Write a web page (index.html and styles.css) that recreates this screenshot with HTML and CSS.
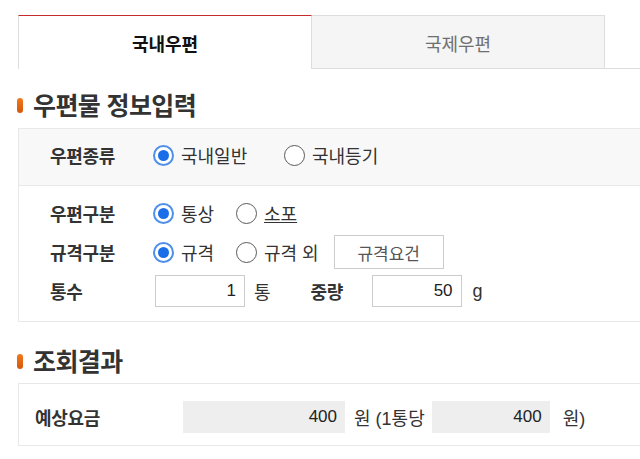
FILE: index.html
```html
<!DOCTYPE html>
<html lang="ko">
<head>
<meta charset="utf-8">
<title>우편요금 조회</title>
<link rel="stylesheet" href="styles.css">
</head>
<body>
<div class="page">
  <div class="tabs">
    <div class="tab active">국내우편</div>
    <div class="tab">국제우편</div>
    <div class="tab-rest"></div>
  </div>

  <h2 class="heading"><span class="bullet"></span>우편물 정보입력</h2>
  <div class="box">
    <div class="row row-first">
      <div class="label">우편종류</div>
      <label class="opt opt-wide"><span class="radio on"></span>국내일반</label>
      <label class="opt"><span class="radio"></span>국내등기</label>
    </div>
    <div class="section">
      <div class="row">
        <div class="label">우편구분</div>
        <label class="opt opt-narrow"><span class="radio on"></span>통상</label>
        <label class="opt"><span class="radio"></span><u>소포</u></label>
      </div>
      <div class="row">
        <div class="label">규격구분</div>
        <label class="opt opt-narrow"><span class="radio on"></span>규격</label>
        <label class="opt"><span class="radio"></span>규격 외</label>
        <button class="btn">규격요건</button>
      </div>
      <div class="row">
        <div class="label">통수</div>
        <div class="field f-count">1</div>
        <span class="unit">통</span>
        <div class="label label-inline">중량</div>
        <div class="field f-weight">50</div>
        <span class="unit unit-g">g</span>
      </div>
    </div>
  </div>

  <h2 class="heading heading-2"><span class="bullet"></span>조회결과</h2>
  <div class="box box-result">
    <div class="row">
      <div class="label label-result">예상요금</div>
      <div class="field readonly f-total">400</div>
      <span class="unit">원 (1통당</span>
      <div class="field readonly f-each">400</div>
      <span class="unit unit-end">원)</span>
    </div>
  </div>
</div>
</body>
</html>
```

FILE: styles.css
```css
html, body {
  margin: 0;
  padding: 0;
  background: #fff;
  overflow: hidden;
}
body {
  font-family: "Liberation Sans", "Noto Sans CJK KR", sans-serif;
  color: #333;
  font-size: 18px;
}
.page {
  width: 700px;
  padding: 15px 0 0 18px;
}
.tabs {
  display: flex;
  height: 54px;
}
.tab {
  width: 293px;
  box-sizing: border-box;
  display: flex;
  align-items: center;
  justify-content: center;
  font-size: 18px;
  color: #6f6f6f;
  background: #f5f5f5;
  border: 1px solid #ddd;
  border-left: none;
  padding-top: 1px;
}
.tab.active {
  width: 294px;
  background: #fff;
  color: #111;
  font-weight: bold;
  border-top: 1px solid #c62c2c;
  border-left: 1px solid #ddd;
  border-bottom: none;
  border-right: 1px solid #ddd;
}
.tab-rest {
  flex: 1;
  border-bottom: 1px solid #ddd;
}
.heading {
  margin: 0 0 0 -1px;
  height: 59px;
  box-sizing: border-box;
  padding-top: 11px;
  display: flex;
  align-items: center;
  font-size: 25px;
  font-weight: bold;
  color: #333;
  letter-spacing: -0.6px;
}
.bullet {
  width: 6px;
  height: 15px;
  border-radius: 3px;
  background: linear-gradient(#f07a1e, #d8560a);
  margin-right: 10px;
  margin-top: 2px;
}
.heading-2 {
  height: 61px;
  padding-top: 15px;
}
.box {
  border: 1px solid #e8e8e8;
  width: 660px;
}
.row {
  display: flex;
  align-items: center;
  height: 34px;
}
.row-first {
  height: 57px;
  background: #f8f8f8;
  border-bottom: 1px solid #e8e8e8;
  padding-bottom: 4px;
  box-sizing: border-box;
}
.section {
  padding: 10px 0 13px;
  display: flex;
  flex-direction: column;
  gap: 5px;
}
.label {
  width: 103px;
  padding-left: 31px;
  font-weight: bold;
  color: #333;
  font-size: 18px;
  letter-spacing: -0.3px;
}
.label-inline {
  width: 61px;
  padding-left: 0;
}
.opt {
  display: flex;
  align-items: center;
  gap: 7px;
  color: #333;
}
.opt-wide { width: 131px; }
.opt-narrow { width: 83px; }
.radio {
  width: 21px;
  height: 21px;
  box-sizing: border-box;
  border-radius: 50%;
  border: 1.5px solid #5a5a5a;
  background: #fff;
  display: inline-block;
  position: relative;
  flex: none;
}
.radio.on {
  border: 2px solid #4f8fea;
}
.radio.on::after {
  content: "";
  position: absolute;
  left: 3px;
  top: 3px;
  width: 11px;
  height: 11px;
  border-radius: 50%;
  background: #1a6fe8;
}
.btn {
  margin-left: 15px;
  width: 110px;
  height: 34px;
  border: 1px solid #ccc;
  background: #fff;
  font-family: inherit;
  font-size: 17px;
  color: #555;
  padding: 0;
}
.field {
  height: 32px;
  box-sizing: border-box;
  border: 1px solid #ccc;
  display: flex;
  align-items: center;
  justify-content: flex-end;
  padding-right: 8px;
  font-size: 17px;
  color: #222;
}
.f-count {
  width: 90px;
  margin-left: 2px;
}
.f-weight {
  width: 90px;
}
.unit {
  margin-left: 9px;
  color: #333;
}
.unit-g { margin-left: 11px; }
.row .unit + .label-inline {
  margin-left: 40px;
}
.box-result {
  padding: 16px 0 11px;
}
.label-result {
  width: 148px;
  padding-left: 16px;
}
.readonly {
  background: #eee;
  border: none;
}
.f-total { width: 162px; }
.f-each { width: 118px; margin-left: 7px; }
.unit-end { margin-left: 13px; }
```
